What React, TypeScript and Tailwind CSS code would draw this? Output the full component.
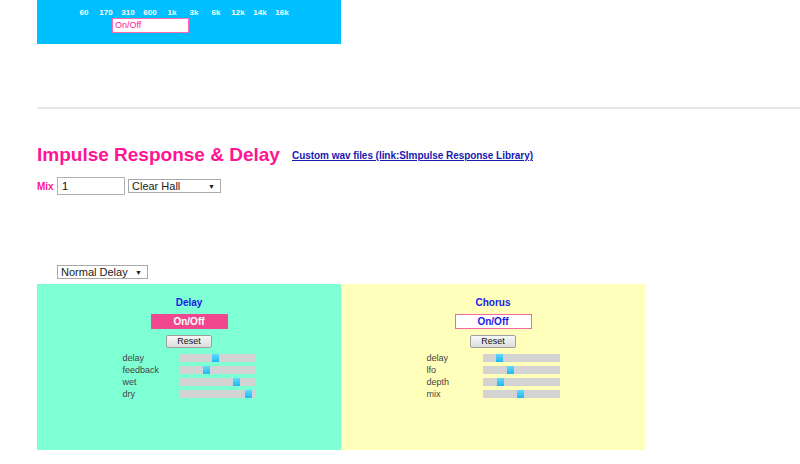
const bands = ['60', '170', '310', '600', '1k', '3k', '6k', '12k', '14k', '16k'];

interface Slider {
  label: string;
  pos: number;
}

function FakeSelect({ label, width }: { label: string; width: string }) {
  return (
    <div
      className={`${width} h-[14px] bg-white border border-[#a9a9a9] flex items-center justify-between pl-[3px] pr-[5px] text-[11px] leading-none text-[#222]`}
    >
      <span>{label}</span>
      <span className="text-[7px]">▼</span>
    </div>
  );
}

function Panel({
  title,
  bg,
  onOff,
  sliders,
}: {
  title: string;
  bg: string;
  onOff: string;
  sliders: Slider[];
}) {
  return (
    <div className={`w-[304px] h-[166px] ${bg} flex flex-col items-center pt-[13px]`}>
      <div className="text-[10px] font-bold text-[#1a1ae6] leading-[12px]">{title}</div>
      <div
        className={`mt-[5px] w-[77px] h-[15px] flex items-center justify-center text-[10px] font-bold leading-none ${onOff}`}
      >
        On/Off
      </div>
      <div className="mt-[6px] w-[46px] h-[13px] rounded-[2px] border border-[#a0a0a0] bg-gradient-to-b from-[#f8f8f8] to-[#dcdcdc] flex items-center justify-center text-[9px] leading-none text-[#111]">
        Reset
      </div>
      <div className="mt-[6px] flex flex-col gap-[4px]">
        {sliders.map((s) => (
          <div key={s.label} className="flex items-center h-[8px]">
            <div className="w-[56px] text-[9px] leading-none text-[#444]">{s.label}</div>
            <div className="relative w-[77px] h-[8px] bg-[#d3d3d3]">
              <div
                className="absolute top-0 w-[7px] h-[8px] bg-gradient-to-b from-[#5fd8ff] to-[#1ab8f0]"
                style={{ left: `${s.pos}px` }}
              />
            </div>
          </div>
        ))}
      </div>
    </div>
  );
}

export default function App() {
  return (
    <div className="w-[800px] h-[464px] overflow-hidden bg-white font-['Liberation_Sans',Arial,sans-serif]">
      <div className="ml-[37px] w-[304px] h-[44px] bg-[#00bfff] pt-[8px]">
        <div className="flex pl-[36px] text-[8px] font-bold text-white leading-[10px]">
          {bands.map((b) => (
            <div key={b} className="w-[22px] text-center">
              {b}
            </div>
          ))}
        </div>
        <div className="ml-[75px] w-[77px] h-[15px] bg-white border border-[#ff69b4] text-[9px] leading-[13px] text-[#ff1493] pl-[2px]">
          On/Off
        </div>
      </div>

      <div className="ml-[37px] mt-[63px] h-[2px] bg-[#e6e6e6]" />

      <div className="ml-[37px] mt-[34px] flex items-baseline">
        <h2 className="w-[255px] text-[19px] font-bold text-[#ff1493] leading-[24px]">
          Impulse Response &amp; Delay
        </h2>
        <a className="relative -top-[2px] text-[10px] font-bold underline text-[#1a1ab0] tracking-[-0.05px]">
          Custom wav files (link:SImpulse Response Library)
        </a>
      </div>

      <div className="ml-[37px] mt-[10px] flex items-center">
        <span className="w-[20px] text-[10px] font-bold text-[#ff1493]">Mix</span>
        <div className="w-[68px] h-[18px] border border-[#b0b0b0] bg-white pl-[4px] text-[11px] leading-[16px] text-[#111]">
          1
        </div>
        <div className="ml-[3px]">
          <FakeSelect label="Clear Hall" width="w-[93px]" />
        </div>
      </div>

      <div className="ml-[57px] mt-[70px]">
        <FakeSelect label="Normal Delay" width="w-[91px]" />
      </div>

      <div className="ml-[37px] mt-[5px] flex">
        <Panel
          title="Delay"
          bg="bg-[#7fffd4]"
          onOff="bg-[#f0478f] text-white"
          sliders={[
            { label: 'delay', pos: 33 },
            { label: 'feedback', pos: 24 },
            { label: 'wet', pos: 54 },
            { label: 'dry', pos: 66 },
          ]}
        />
        <Panel
          title="Chorus"
          bg="bg-[#ffffbb]"
          onOff="bg-white border border-[#f06aa0] text-[#1a1ae6]"
          sliders={[
            { label: 'delay', pos: 13 },
            { label: 'lfo', pos: 24 },
            { label: 'depth', pos: 14 },
            { label: 'mix', pos: 34 },
          ]}
        />
      </div>
    </div>
  );
}
